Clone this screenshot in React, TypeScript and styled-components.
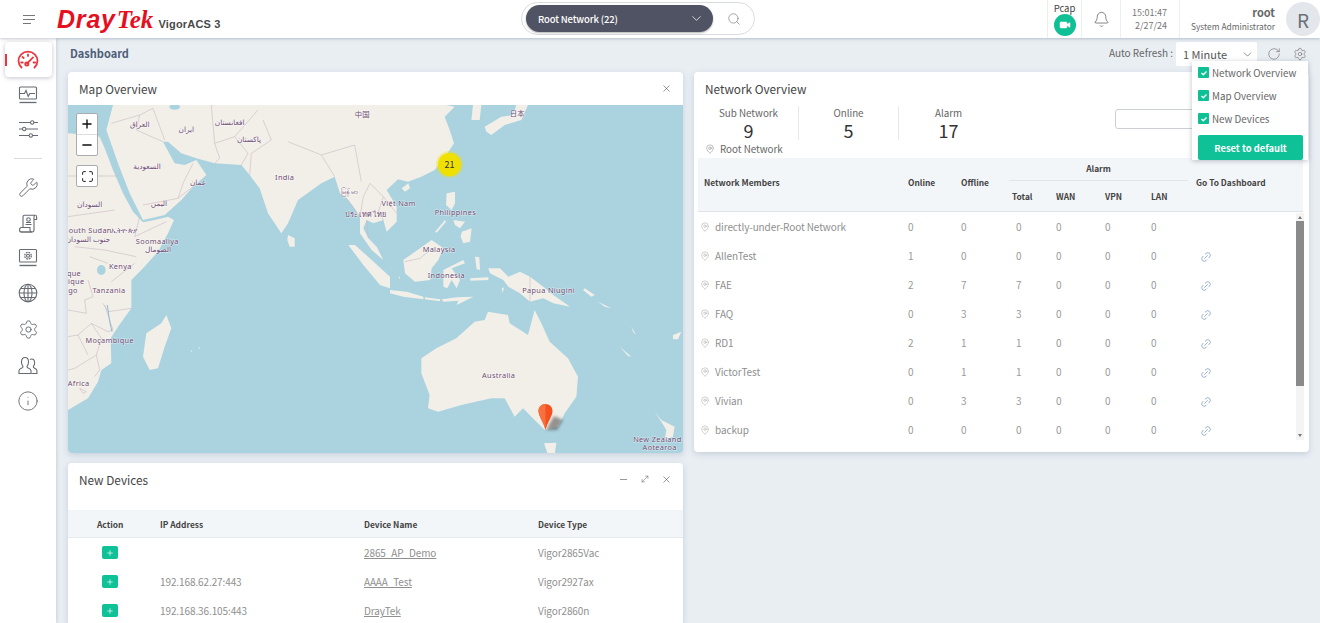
import React from "react";
import styled, { createGlobalStyle, css } from "styled-components";
import {
  Bell,
  ChevronDown,
  Info,
  Link2,
  MapPin,
  Maximize,
  Minus,
  MoveDiagonal,
  Plus,
  RotateCw,
  Search,
  Settings,
  Video,
  Wrench,
  X,
} from "lucide-react";

const GlobalStyle = createGlobalStyle`
  html, body {
    margin: 0;
    height: 100%;
    overflow: hidden;
    background: #e9eef3;
    font-family: "Noto Sans CJK KR", "Noto Sans", sans-serif;
  }
`;

const Page = styled.div`
  width: 1320px;
  height: 623px;
  display: flex;
  flex-direction: column;
  overflow: hidden;
`;

const Header = styled.header`
  height: 38px;
  flex: none;
  display: flex;
  align-items: center;
  background: #fff;
  box-shadow: 0 1px 3px rgba(90, 100, 120, 0.35);
  position: relative;
  z-index: 3;
`;

const Burger = styled.div`
  width: 12px;
  margin-left: 23px;
  display: flex;
  flex-direction: column;
  gap: 3px;
  span {
    height: 1px;
    background: #777;
  }
  span:last-child {
    width: 8px;
  }
`;

const Logo = styled.div`
  margin-left: 22px;
  display: flex;
  align-items: baseline;
  color: #e60f1f;
  font-size: 25px;
  line-height: 38px;
  font-style: italic;
  font-weight: 700;
`;

const LogoDray = styled.span`
  font-family: "Liberation Sans", sans-serif;
  letter-spacing: 0.8px;
`;

const LogoTek = styled.span`
  font-family: "Liberation Serif", serif;
  margin-left: 1px;
`;

const Product = styled.span`
  margin-left: 5px;
  font: 700 11px "Liberation Sans", sans-serif;
  letter-spacing: 0.2px;
  color: #4a4a4a;
  font-style: normal;
`;

const SearchPill = styled.div`
  position: absolute;
  left: 521px;
  top: 2px;
  width: 234px;
  height: 33px;
  box-sizing: border-box;
  border: 1px solid #d8dbe0;
  border-radius: 17px;
  display: flex;
  align-items: center;
  padding-left: 4px;
  background: #fff;
`;

const NetworkPick = styled.div`
  width: 187px;
  height: 27px;
  box-sizing: border-box;
  padding: 0 9px 0 12px;
  border-radius: 14px;
  background: #4f5364;
  color: #fff;
  font-size: 9.5px;
  letter-spacing: -0.15px;
  font-weight: 500;
  display: flex;
  align-items: center;
  justify-content: space-between;
  box-shadow: 0 1px 2px rgba(0, 0, 0, 0.3);
`;

const SearchSlot = styled.div`
  flex: 1;
  display: flex;
  justify-content: center;
  color: #777;
`;

const HeaderRight = styled.div`
  margin-left: auto;
  display: flex;
  height: 38px;
`;

const HeadCell = styled.div<{ $w: number }>`
  width: ${(p) => p.$w}px;
  box-sizing: border-box;
  border-left: 1px solid #eceef1;
  display: flex;
  flex-direction: column;
  align-items: center;
  justify-content: center;
`;

const PcapLabel = styled.span`
  font-size: 9.5px;
  line-height: 11px;
  color: #444;
`;

const PcapButton = styled.div`
  width: 22px;
  height: 22px;
  border-radius: 50%;
  background: #0fbf95;
  display: flex;
  align-items: center;
  justify-content: center;
  color: #fff;
`;

const ClockCell = styled(HeadCell)`
  align-items: flex-end;
  padding-right: 12px;
  font-size: 9px;
  line-height: 13px;
  color: #777;
`;

const UserCell = styled.div`
  width: 141px;
  box-sizing: border-box;
  border-left: 1px solid #eceef1;
  display: flex;
  align-items: center;
  justify-content: flex-end;
`;

const UserText = styled.div`
  text-align: right;
  margin-right: 11px;
`;

const UserName = styled.div`
  font-size: 11px;
  line-height: 14px;
  font-weight: 700;
  color: #666;
`;

const UserRole = styled.div`
  font-size: 8.4px;
  line-height: 14px;
  color: #666;
`;

const Avatar = styled.div`
  width: 34px;
  height: 34px;
  border-radius: 50%;
  background: #e3e6eb;
  color: #6b6f78;
  font-size: 19px;
  display: flex;
  align-items: center;
  justify-content: center;
`;

const Body = styled.div`
  flex: 1;
  display: flex;
  min-height: 0;
`;

const Sidebar = styled.nav`
  width: 56px;
  flex: none;
  background: #fff;
  box-shadow: 1px 0 3px rgba(120, 130, 150, 0.25);
  display: flex;
  flex-direction: column;
  align-items: center;
  padding-top: 4px;
  box-sizing: border-box;
  position: relative;
  z-index: 2;
`;

const NavActive = styled.div`
  width: 47px;
  height: 35px;
  border-radius: 4px;
  background: #fff;
  box-shadow: 0 1px 4px rgba(80, 90, 110, 0.35);
  display: flex;
  align-items: center;
  justify-content: center;
  position: relative;
  &::before {
    content: "";
    position: absolute;
    left: 0;
    top: 12px;
    width: 2px;
    height: 12px;
    background: #e8383f;
  }
`;

const NavItem = styled.div<{ $h: number }>`
  height: ${(p) => p.$h}px;
  width: 100%;
  display: flex;
  align-items: center;
  justify-content: center;
  color: #666a72;
`;

const NavRule = styled.div`
  width: 28px;
  height: 1px;
  background: #d9dcdf;
  margin: 13px 0 10px;
`;

const Main = styled.main`
  flex: 1;
  min-width: 0;
  padding: 0 11px 0 12px;
  display: flex;
  flex-direction: column;
`;

const TopLine = styled.div`
  height: 34px;
  flex: none;
  box-sizing: border-box;
  padding-bottom: 5px;
  display: flex;
  align-items: center;
  position: relative;
`;

const Crumb = styled.span`
  margin-left: 2px;
  font-size: 11px;
  font-weight: 700;
  color: #4e5d78;
`;

const RefreshLabel = styled.span`
  margin-left: auto;
  font-size: 10px;
  color: #666;
`;

const RefreshSelect = styled.div`
  margin-left: 3px;
  margin-top: 3px;
  width: 81px;
  height: 24px;
  box-sizing: border-box;
  padding: 0 3px 0 7px;
  background: #fff;
  border-radius: 2px;
  font-size: 11px;
  color: #555;
  display: flex;
  align-items: center;
  justify-content: space-between;
`;

const ToolIcons = styled.div`
  display: flex;
  align-items: center;
  gap: 12px;
  margin: 2px 2px 0 10px;
  color: #666;
`;

const PanelMenu = styled.div`
  position: absolute;
  left: 1124px;
  top: 23px;
  width: 116px;
  height: 99px;
  box-sizing: border-box;
  padding: 0 5px 0 6px;
  background: #fff;
  box-shadow: 0 1px 5px rgba(70, 80, 100, 0.35);
  z-index: 4;
`;

const MenuRow = styled.label`
  height: 23px;
  display: flex;
  align-items: center;
  gap: 3px;
  font-size: 9.8px;
  color: #666;
`;

const Check = styled.span`
  width: 11px;
  height: 11px;
  border-radius: 1px;
  background: #0fbf95;
  display: flex;
  align-items: center;
  justify-content: center;
`;

const ResetButton = styled.div`
  margin-top: 5px;
  height: 25px;
  border-radius: 2px;
  background: #0fc197;
  color: #fff;
  font-size: 9.4px;
  font-weight: 700;
  display: flex;
  align-items: center;
  justify-content: center;
`;

const Columns = styled.div`
  flex: 1;
  min-height: 0;
  display: flex;
  gap: 11px;
  align-items: flex-start;
`;

const Column = styled.div`
  width: 615px;
  display: flex;
  flex-direction: column;
  gap: 10px;
`;

const Card = styled.section`
  background: #fff;
  border-radius: 4px;
  box-shadow: 0 2px 6px rgba(120, 135, 160, 0.3);
  overflow: hidden;
`;

const CardHead = styled.div<{ $pad?: number }>`
  height: 33px;
  box-sizing: border-box;
  padding: 0 11px 1px;
  display: flex;
  align-items: center;
  margin-bottom: ${(p) => p.$pad ?? 0}px;
  font-size: 11.8px;
  color: #444;
`;

const CardActions = styled.div`
  margin-left: auto;
  display: flex;
  align-items: center;
  gap: 11px;
  color: #444;
`;

const MapFrame = styled.div`
  position: relative;
  height: 348px;
  background: #aad3df;
  overflow: hidden;
`;

const MapSvg = styled.svg`
  display: block;
  width: 615px;
  height: 348px;
  text {
    font-family: "Noto Sans", "Noto Sans CJK SC", "DejaVu Sans", sans-serif;
    font-size: 22px;
    fill: #6d4a72;
    letter-spacing: 1px;
    text-anchor: middle;
    stroke: rgba(255, 255, 255, 0.6);
    stroke-width: 3px;
    paint-order: stroke;
  }
`;

const ZoomBox = styled.div`
  position: absolute;
  left: 8px;
  top: 8px;
  width: 22px;
  box-sizing: border-box;
  background: #fff;
  border: 1px solid #a9adb1;
  border-radius: 2px;
  display: flex;
  flex-direction: column;
  color: #111;
`;

const ZoomStep = styled.div`
  height: 20px;
  display: flex;
  align-items: center;
  justify-content: center;
  & + & {
    border-top: 1px solid #ddd;
  }
`;

const FullBox = styled(ZoomBox)`
  top: 60px;
  height: 22px;
  align-items: center;
  justify-content: center;
`;

const Cluster = styled.div`
  position: absolute;
  left: 370px;
  top: 48px;
  width: 23px;
  height: 23px;
  border-radius: 50%;
  background: #f0e000;
  box-shadow: 0 0 0 2px rgba(240, 224, 0, 0.35);
  font-size: 9px;
  color: #333;
  display: flex;
  align-items: center;
  justify-content: center;
`;

const MapPinMark = styled.svg`
  position: absolute;
  left: 470px;
  top: 299px;
`;

const StatRow = styled.div`
  display: flex;
  padding: 1px 0 0 5px;
  box-sizing: border-box;
  height: 35px;
  align-items: stretch;
  position: relative;
`;

const Stat = styled.div<{ $rule?: boolean }>`
  width: 99px;
  text-align: center;
  border-right: ${(p) => (p.$rule ? "1px solid #e6e8eb" : "none")};
`;

const StatLabel = styled.div`
  font-size: 9.8px;
  line-height: 15px;
  color: #666;
`;

const StatValue = styled.div`
  font-size: 18px;
  line-height: 19px;
  color: #333;
`;

const FilterInput = styled.div`
  position: absolute;
  left: 421px;
  top: 4px;
  width: 90px;
  height: 20px;
  box-sizing: border-box;
  border: 1px solid #ccd0d4;
  border-radius: 3px;
`;

const RootPath = styled.div`
  height: 18px;
  padding-left: 11px;
  display: flex;
  align-items: center;
  gap: 5px;
  font-size: 9.8px;
  color: #666;
`;

const TableWrap = styled.div`
  margin: 0 6px 0 4px;
  position: relative;
  height: 294px;
`;

const memberGrid = css`
  display: grid;
  grid-template-columns: 204px 53px 51px 44px 49px 46px 45px 1fr;
  padding-left: 6px;
`;

const MemberHead = styled.div`
  ${memberGrid}
  height: 54px;
  box-sizing: border-box;
  grid-template-rows: 23px 30px;
  background: #f3f6f9;
  border-bottom: 1px solid #dfe3e7;
  font-size: 8.4px;
  font-weight: 700;
  color: #444;
  white-space: nowrap;
`;

const HeadSpan = styled.div<{ $col: number }>`
  grid-column: ${(p) => p.$col};
  grid-row: 1 / 3;
  display: flex;
  align-items: center;
  padding-bottom: 5px;
`;

const AlarmGroup = styled.div`
  grid-column: 4 / 8;
  grid-row: 1;
  margin-left: -3px;
  margin-right: 8px;
  padding-bottom: 3px;
  border-bottom: 1px solid #e2e5e8;
  display: flex;
  align-items: center;
  justify-content: center;
`;

const HeadSub = styled.div<{ $col: number }>`
  grid-column: ${(p) => p.$col};
  grid-row: 2;
  display: flex;
  align-items: center;
  padding-bottom: 1px;
`;

const MemberRow = styled.div`
  ${memberGrid}
  height: 29px;
  align-items: center;
  font-size: 10px;
  letter-spacing: -0.1px;
  color: #9a9a9a;
`;

const MemberName = styled.div`
  display: flex;
  align-items: center;
  gap: 5px;
  margin-left: -4px;
  color: #8f8f8f;
`;

const TotalValue = styled.span`
  padding-left: 4px;
`;

const LinkCell = styled.span`
  padding: 2px 0 0 4px;
  display: flex;
  color: #6f8fbf;
`;

const ScrollBar = styled.div`
  position: absolute;
  right: -1px;
  top: 55px;
  width: 8px;
  height: 227px;
  background: #f4f4f4;
`;

const ScrollThumb = styled.div`
  position: absolute;
  top: 8px;
  left: 0;
  right: 0;
  height: 165px;
  background: #8a8a8a;
`;

const ScrollArrow = styled.div<{ $down?: boolean }>`
  position: absolute;
  left: 1.5px;
  ${(p) => (p.$down ? "bottom: 3px;" : "top: 3px;")}
  width: 0;
  height: 0;
  border-left: 2.5px solid transparent;
  border-right: 2.5px solid transparent;
  ${(p) => (p.$down ? "border-top: 3px solid #777;" : "border-bottom: 3px solid #777;")}
`;

const deviceGrid = css`
  display: grid;
  grid-template-columns: 92px 204px 174px 1fr;
`;

const DeviceHead = styled.div`
  ${deviceGrid}
  height: 28px;
  background: #f3f6f9;
  border-bottom: 1px solid #e8ebee;
  box-sizing: border-box;
  align-items: center;
  font-size: 8.4px;
  font-weight: 700;
  color: #444;
`;

const ActionHead = styled.span`
  padding-left: 29px;
`;

const DeviceRow = styled.div`
  ${deviceGrid}
  height: 29px;
  align-items: center;
  font-size: 10px;
  letter-spacing: -0.1px;
  color: #8f8f8f;
`;

const AddButton = styled.div`
  margin-left: 34px;
  width: 16px;
  height: 13px;
  border-radius: 2px;
  background: #0fc197;
  color: #fff;
  display: flex;
  align-items: center;
  justify-content: center;
`;

const DeviceLink = styled.span`
  text-decoration: underline;
`;

const GaugeIcon = () => (
  <svg width="22" height="20" viewBox="0 0 22 20" fill="none" stroke="#e8383f" strokeWidth="1.8" strokeLinecap="round">
    <path d="M4.5 17.5C2.6 15.6 1.5 13.2 1.5 10.8 1.5 5.7 5.7 1.7 11 1.7s9.5 4 9.5 9.1c0 2.4-1.1 4.8-3 6.7" />
    <path d="M11 4.5v1.6M5.500 7l1.200 1M4.200 12.500h1.600M16.600 12.500h1.600" />
    <path d="M10 13.600l6-6.200" />
    <circle cx="9.8" cy="14" r="1.6" />
  </svg>
);

const MonitorIcon = () => (
  <svg width="20" height="18" viewBox="0 0 20 18" fill="none" stroke="currentColor" strokeWidth="1.1">
    <rect x="1.5" y="1" width="17" height="12" rx="1" />
    <path d="M1.5 7.5h5l1.5-3 2.2 6 1.6-3h5.2" />
    <path d="M1.5 16.5h17" strokeWidth="1.3" />
  </svg>
);

const SlidersIcon = () => (
  <svg width="21" height="20" viewBox="0 0 21 20" fill="none" stroke="currentColor" strokeWidth="1.1">
    <path d="M1 3.500h11.500M16 3.500h4M1 10h3.500M8 10h12M1 16.500h10M14.500 16.500h5.500" />
    <circle cx="14.2" cy="3.500" r="1.700" />
    <circle cx="6.200" cy="10" r="1.700" />
    <circle cx="12.800" cy="16.500" r="1.700" />
  </svg>
);

const ScrollCertIcon = () => (
  <svg width="20" height="20" viewBox="0 0 20 20" fill="none" stroke="currentColor" strokeWidth="1.1">
    <path d="M5 13V3c0-1 .6-1.700 1.600-1.700h10.800c-.9 0-1.400.7-1.400 1.700v13c0 1.200-.7 2-1.800 2H3" />
    <path d="M16 5.500h2.600V3c0-1-.5-1.700-1.200-1.700" />
    <path d="M1.500 16c0-1.600.7-2.500 2-2.500H12V16c0 1.200.8 2 2 2H3.500c-1.200 0-2-.8-2-2z" />
    <circle cx="10.500" cy="5.500" r="1.800" />
    <path d="M7.500 10.500h6M8 8.500h5" />
  </svg>
);

const LaptopGearIcon = () => (
  <svg width="20" height="20" viewBox="0 0 20 20" fill="none" stroke="currentColor" strokeWidth="1.1">
    <rect x="1.5" y="1.5" width="17" height="12.5" rx="1" />
    <circle cx="10" cy="7.7" r="1.5" />
    <circle cx="10" cy="7.7" r="3.3" strokeDasharray="1.7 .9" strokeWidth="1.3" />
    <path d="M1.5 17.5h17" strokeWidth="1.4" />
  </svg>
);

const GlobeGridIcon = () => (
  <svg width="20" height="20" viewBox="0 0 20 20" fill="none" stroke="currentColor" strokeWidth="1.1">
    <circle cx="10" cy="10" r="8.8" />
    <ellipse cx="10" cy="10" rx="4" ry="8.8" />
    <path d="M10 1.200v17.600M1.200 10h17.600M2.500 5.500h15M2.500 14.500h15" />
  </svg>
);

const UsersIcon = () => (
  <svg width="20" height="19" viewBox="0 0 20 19" fill="none" stroke="currentColor" strokeWidth="1.1">
    <path d="M1 17.500v-3c0-1.200 1.500-1.800 3.300-2.700.9-.5.800-1.400.2-2.200C3.700 8.600 3.500 7.500 3.500 6c0-2.800 1.300-4.500 3.500-4.500S10.500 3.200 10.500 6c0 1.500-.2 2.600-1 3.600-.6.800-.7 1.700.2 2.200 1.800.9 3.300 1.500 3.300 2.700v3z" />
    <path d="M12 3.500c.5-.3 1-.5 1.600-.5 2 0 3 1.500 3 3.800 0 1.300-.2 2.300-.9 3.100-.5.700-.5 1.400.3 1.900 1.500.8 2.900 1.300 2.900 2.500v3.200h-5.500" />
  </svg>
);

const CheckMark = () => (
  <svg width="8" height="8" viewBox="0 0 8 8" fill="none" stroke="#fff" strokeWidth="1.3">
    <path d="M1.500 4l1.800 1.800L6.500 2.500" />
  </svg>
);

const LAND = "#f2efe9";
const BORDER = "#c9b8c2";

// map shapes, in units of a third of a pixel (the map is 1845 x 1044)
const asia =
  "135,0 1135,0 1160,5 1130,35 1145,75 1158,115 1135,150 1100,195 1060,215 1020,230 990,223 975,237 956,255 986,305 986,350 956,380 946,345 916,355 896,345 886,370 901,400 926,425 946,465 911,435 876,385 876,335 856,305 836,280 816,265 800,215 760,235 690,285 660,355 640,385 620,355 600,325 575,250 545,210 520,180 440,175 385,160 340,145 300,110 285,110 320,175 350,180 385,165 415,210 375,245 340,285 290,330 225,345 185,265 150,175 115,75";
const africa =
  "0,85 60,90 95,95 110,130 135,195 165,265 195,320 225,352 260,345 300,335 318,345 300,385 270,440 225,490 190,525 190,610 150,665 128,700 130,775 100,795 90,830 60,880 0,915";

const tiles: { dx: number; dy: number; land: string[]; lines?: string[] }[] = [
  {
    dx: 0,
    dy: 0,
    land: [
      asia,
      africa,
      "660,390 680,400 680,425 665,425 658,405",
      "1215,0 1240,0 1235,45 1210,45",
      "1250,65 1300,35 1335,30 1345,0 1380,0 1360,45 1310,60 1270,90 1255,80",
    ],
    lines: [
      "M130 55 L215 30 L255 10",
      "M215 30 L205 75 L285 110",
      "M255 10 L290 105",
      "M430 0 L440 115 L455 160 L440 175",
      "M440 115 L500 95 L570 15",
      "M500 95 L540 145 L520 180",
      "M585 45 L610 105 L550 145 L545 210",
      "M660 110 L760 150 L860 120 L870 175 L880 230",
      "M760 150 L800 215",
      "M0 213 L150 213",
      "M225 300 L330 280 L375 245",
      "M330 280 L345 235 L375 175",
      "M140 315 L0 335",
      "M215 335 L200 395 L295 350",
      "M205 455 L110 435 L20 425",
      "M120 475 L65 455",
      "M200 475 L130 530",
    ],
  },
  {
    dx: 816,
    dy: 225,
    land: [
      "185,25 205,10 210,25 195,35",
      "320,40 345,35 345,70 335,90 318,75",
      "365,155 395,145 390,185 370,190 362,170",
      "340,120 375,125 360,145 345,135",
      "285,155 315,120 318,125 290,158",
      "25,195 45,195 95,240 150,290 150,325 120,315 70,255",
      "150,330 200,335 250,350 250,358 190,350 150,340",
      "255,352 300,358 300,364 255,358",
      "305,358 350,352 400,350 385,358 350,375 355,362 310,365",
      "190,240 240,205 275,180 310,205 295,240 275,265 270,300 225,305 195,280",
      "310,270 370,240 375,250 335,265 360,300 350,325 335,300 322,325 310,320",
      "445,265 480,265 505,290 540,275 570,290 610,320 640,345 690,380 640,370 610,355 570,365 540,340 505,320 490,300 450,280",
      "390,295 445,292 445,300 392,302",
      "405,230 418,232 420,270 410,268",
      "485,325 492,322 488,340",
      "175,292 180,290 180,296",
    ],
    lines: [
      "M20 55 L60 110",
      "M90 10 L130 50 L115 95 L130 120",
      "M90 10 L70 50 L60 110",
      "M130 50 L170 100",
      "M195 245 L240 235 L265 215",
      "M570 290 L570 365",
      "M80 120 L85 175",
    ],
  },
  {
    dx: 930,
    dy: 525,
    land: [
      "130,235 175,205 235,175 290,125 320,120 330,95 390,105 395,130 450,165 470,90 490,130 515,185 570,235 600,290 595,350 560,400 540,440 500,450 470,420 435,385 410,410 380,355 340,355 250,375 180,395 150,385 155,345 130,280",
      "498,490 535,488 530,525 510,525",
      "830,395 850,420 890,440 885,470 860,480 865,450 850,425",
      "620,25 650,45 640,50 615,30",
      "660,65 700,85 680,80",
      "760,140 775,165 765,155",
      "725,200 760,230 750,228",
      "885,165 910,155 900,178 885,178",
    ],
  },
  {
    dx: 0,
    dy: 525,
    land: [
      "295,105 310,145 290,200 270,265 245,270 225,230 235,160 280,130",
      "368,210 373,212 370,216",
      "392,200 396,204 393,208",
    ],
    lines: [
      "M60 0 L75 50 L50 60 L55 100 L0 90",
      "M110 75 L125 120 L135 150 L120 155 L70 130 L30 165 L0 170",
      "M190 85 L120 95 L105 70",
      "M70 130 L100 175 L85 225 L20 265 L0 270",
      "M85 225 L95 270 L80 290",
      "M30 165 L60 225",
      "M35 325 L55 335 L45 340 Z",
    ],
  },
];

const labels: [string, number, number][] = [
  ["العراق", 215, 67],
  ["ايران", 355, 80],
  ["افغانستان", 485, 60],
  ["پاکستان", 543, 112],
  ["السعودية", 237, 193],
  ["عمان", 390, 240],
  ["India", 650, 226],
  ["မြန်မာ", 845, 266],
  ["ประเทศไทย", 893, 335],
  ["中国", 883, 37],
  ["السودان", 65, 305],
  ["اليمن", 273, 302],
  ["South Sudan", 60, 384],
  ["ኢትዮጵያ", 168, 384],
  ["جنوب السودان", 60, 410],
  ["Soomaaliya", 268, 417],
  ["الصومال", 270, 440],
  ["Kenya", 157, 492],
  ["que", 18, 512],
  ["日本", 1348, 32],
  ["Việt Nam", 992, 302],
  ["Philippines", 1162, 331],
  ["Malaysia", 1113, 440],
  ["Indonesia", 1135, 519],
  ["tique", 20, 537],
  ["go", 15, 564],
  ["Tanzania", 123, 564],
  ["Moçambique", 125, 715],
  ["Africa", 32, 843],
  ["Papua Niugini", 1442, 564],
  ["Australia", 1292, 818],
  ["New Zealand", 1768, 1010],
  ["Aotearoa", 1775, 1035],
];

const WorldMap = () => (
  <MapSvg viewBox="0 0 1845 1044">
    {tiles.map((tile) => (
      <g key={tile.dx + tile.dy} transform={`translate(${tile.dx} ${tile.dy})`}>
        {tile.land.map((points) => (
          <polygon key={points} points={points} fill={LAND} />
        ))}
        <g fill="none" stroke={BORDER} strokeWidth="1.8">
          {(tile.lines ?? []).map((d) => (
            <path key={d} d={d} />
          ))}
        </g>
      </g>
    ))}
    <ellipse cx="320" cy="6" rx="16" ry="8" fill="#aad3df" />
    <ellipse cx="100" cy="495" rx="13" ry="15" fill="#aad3df" />
    <path d="M118 600 L125 650 L132 680" stroke="#8dbdd0" strokeWidth="3" fill="none" />
    {labels.map(([text, x, y]) => (
      <text key={text} x={x} y={y}>
        {text}
      </text>
    ))}
  </MapSvg>
);

const members: [string, number, number, number, boolean][] = [
  ["directly-under-Root Network", 0, 0, 0, false],
  ["AllenTest", 1, 0, 0, true],
  ["FAE", 2, 7, 7, true],
  ["FAQ", 0, 3, 3, true],
  ["RD1", 2, 1, 1, true],
  ["VictorTest", 0, 1, 1, true],
  ["Vivian", 0, 3, 3, true],
  ["backup", 0, 0, 0, true],
];

const devices = [
  { ip: "", name: "2865_AP_Demo", type: "Vigor2865Vac" },
  { ip: "192.168.62.27:443", name: "AAAA_Test", type: "Vigor2927ax" },
  { ip: "192.168.36.105:443", name: "DrayTek", type: "Vigor2860n" },
];

const panels = ["Network Overview", "Map Overview", "New Devices"];

export default function App() {
  return (
    <Page>
      <GlobalStyle />
      <Header>
        <Burger>
          <span />
          <span />
          <span />
        </Burger>
        <Logo>
          <LogoDray>Dray</LogoDray>
          <LogoTek>Tek</LogoTek>
          <Product>VigorACS 3</Product>
        </Logo>
        <SearchPill>
          <NetworkPick>
            Root Network (22)
            <ChevronDown size={15} strokeWidth={1.2} />
          </NetworkPick>
          <SearchSlot>
            <Search size={14} strokeWidth={1.1} />
          </SearchSlot>
        </SearchPill>
        <HeaderRight>
          <HeadCell $w={34}>
            <PcapLabel>Pcap</PcapLabel>
            <PcapButton>
              <Video size={12} fill="#fff" strokeWidth={1} />
            </PcapButton>
          </HeadCell>
          <HeadCell $w={39}>
            <Bell size={17} strokeWidth={1} color="#555" />
          </HeadCell>
          <ClockCell $w={59}>
            <div>15:01:47</div>
            <div>2/27/24</div>
          </ClockCell>
          <UserCell>
            <UserText>
              <UserName>root</UserName>
              <UserRole>System Administrator</UserRole>
            </UserText>
            <Avatar>R</Avatar>
          </UserCell>
        </HeaderRight>
      </Header>
      <Body>
        <Sidebar>
          <NavActive>
            <GaugeIcon />
          </NavActive>
          <NavItem $h={35}>
            <MonitorIcon />
          </NavItem>
          <NavItem $h={33}>
            <SlidersIcon />
          </NavItem>
          <NavRule />
          <NavItem $h={37}>
            <Wrench size={21} strokeWidth={1.1} />
          </NavItem>
          <NavItem $h={35}>
            <ScrollCertIcon />
          </NavItem>
          <NavItem $h={34}>
            <LaptopGearIcon />
          </NavItem>
          <NavItem $h={36}>
            <GlobeGridIcon />
          </NavItem>
          <NavItem $h={36}>
            <Settings size={21} strokeWidth={1.1} />
          </NavItem>
          <NavItem $h={36}>
            <UsersIcon />
          </NavItem>
          <NavItem $h={36}>
            <Info size={22} strokeWidth={1} />
          </NavItem>
        </Sidebar>
        <Main>
          <TopLine>
            <Crumb>Dashboard</Crumb>
            <RefreshLabel>Auto Refresh :</RefreshLabel>
            <RefreshSelect>
              1 Minute
              <ChevronDown size={13} strokeWidth={1.2} />
            </RefreshSelect>
            <ToolIcons>
              <RotateCw size={14} strokeWidth={1} />
              <Settings size={14} strokeWidth={1} />
            </ToolIcons>
            <PanelMenu>
              {panels.map((panel) => (
                <MenuRow key={panel}>
                  <Check>
                    <CheckMark />
                  </Check>
                  {panel}
                </MenuRow>
              ))}
              <ResetButton>Reset to default</ResetButton>
            </PanelMenu>
          </TopLine>
          <Columns>
            <Column>
              <Card>
                <CardHead>
                  Map Overview
                  <CardActions>
                    <X size={11} strokeWidth={1.2} />
                  </CardActions>
                </CardHead>
                <MapFrame>
                  <WorldMap />
                  <ZoomBox>
                    <ZoomStep>
                      <Plus size={14} strokeWidth={2.4} />
                    </ZoomStep>
                    <ZoomStep>
                      <Minus size={14} strokeWidth={2.4} />
                    </ZoomStep>
                  </ZoomBox>
                  <FullBox>
                    <Maximize size={13} strokeWidth={1.8} />
                  </FullBox>
                  <Cluster>21</Cluster>
                  <MapPinMark width="30" height="30" viewBox="0 0 30 30">
                    <defs>
                      <filter id="pin-shadow" x="-30%" y="-30%" width="160%" height="160%">
                        <feGaussianBlur stdDeviation="1.6" />
                      </filter>
                    </defs>
                    <path d="M8 26 L16 12 L25 16 L19 26 Z" fill="#555" opacity="0.6" filter="url(#pin-shadow)" />
                    <path d="M7.5 0C3.4 0 .5 3 .5 7c0 5 5 11 7 19 2-8 7-14 7-19 0-4-2.900-7-7-7z" fill="#f4511e" />
                    <path d="M7.5 0C3.4 0 .5 3 .5 7c0 5 5 11 7 19z" fill="#f8703f" />
                  </MapPinMark>
                </MapFrame>
              </Card>
              <Card>
                <CardHead $pad={14}>
                  New Devices
                  <CardActions>
                    <Minus size={11} strokeWidth={1.2} />
                    <MoveDiagonal size={10} strokeWidth={1} />
                    <X size={11} strokeWidth={1.2} />
                  </CardActions>
                </CardHead>
                <DeviceHead>
                  <ActionHead>Action</ActionHead>
                  <span>IP Address</span>
                  <span>Device Name</span>
                  <span>Device Type</span>
                </DeviceHead>
                {devices.map((device) => (
                  <DeviceRow key={device.name}>
                    <AddButton>
                      <Plus size={8} strokeWidth={2} />
                    </AddButton>
                    <span>{device.ip}</span>
                    <DeviceLink>{device.name}</DeviceLink>
                    <span>{device.type}</span>
                  </DeviceRow>
                ))}
              </Card>
            </Column>
            <Column>
              <Card>
                <CardHead>Network Overview</CardHead>
                <StatRow>
                  <Stat $rule>
                    <StatLabel>Sub Network</StatLabel>
                    <StatValue>9</StatValue>
                  </Stat>
                  <Stat $rule>
                    <StatLabel>Online</StatLabel>
                    <StatValue>5</StatValue>
                  </Stat>
                  <Stat>
                    <StatLabel>Alarm</StatLabel>
                    <StatValue>17</StatValue>
                  </Stat>
                  <FilterInput />
                </StatRow>
                <RootPath>
                  <MapPin size={10} strokeWidth={1} />
                  Root Network
                </RootPath>
                <TableWrap>
                  <MemberHead>
                    <HeadSpan $col={1}>Network Members</HeadSpan>
                    <HeadSpan $col={2}>Online</HeadSpan>
                    <HeadSpan $col={3}>Offline</HeadSpan>
                    <AlarmGroup>Alarm</AlarmGroup>
                    <HeadSpan $col={8}>Go To Dashboard</HeadSpan>
                    <HeadSub $col={4}>Total</HeadSub>
                    <HeadSub $col={5}>WAN</HeadSub>
                    <HeadSub $col={6}>VPN</HeadSub>
                    <HeadSub $col={7}>LAN</HeadSub>
                  </MemberHead>
                  {members.map(([name, online, offline, total, linked]) => (
                    <MemberRow key={name}>
                      <MemberName>
                        <MapPin size={10} strokeWidth={1} />
                        {name}
                      </MemberName>
                      <span>{online}</span>
                      <span>{offline}</span>
                      <TotalValue>{total}</TotalValue>
                      <span>0</span>
                      <span>0</span>
                      <span>0</span>
                      <LinkCell>{linked && <Link2 size={12} strokeWidth={1.3} transform="rotate(-45)" />}</LinkCell>
                    </MemberRow>
                  ))}
                  <ScrollBar>
                    <ScrollArrow />
                    <ScrollThumb />
                    <ScrollArrow $down />
                  </ScrollBar>
                </TableWrap>
              </Card>
            </Column>
          </Columns>
        </Main>
      </Body>
    </Page>
  );
}
